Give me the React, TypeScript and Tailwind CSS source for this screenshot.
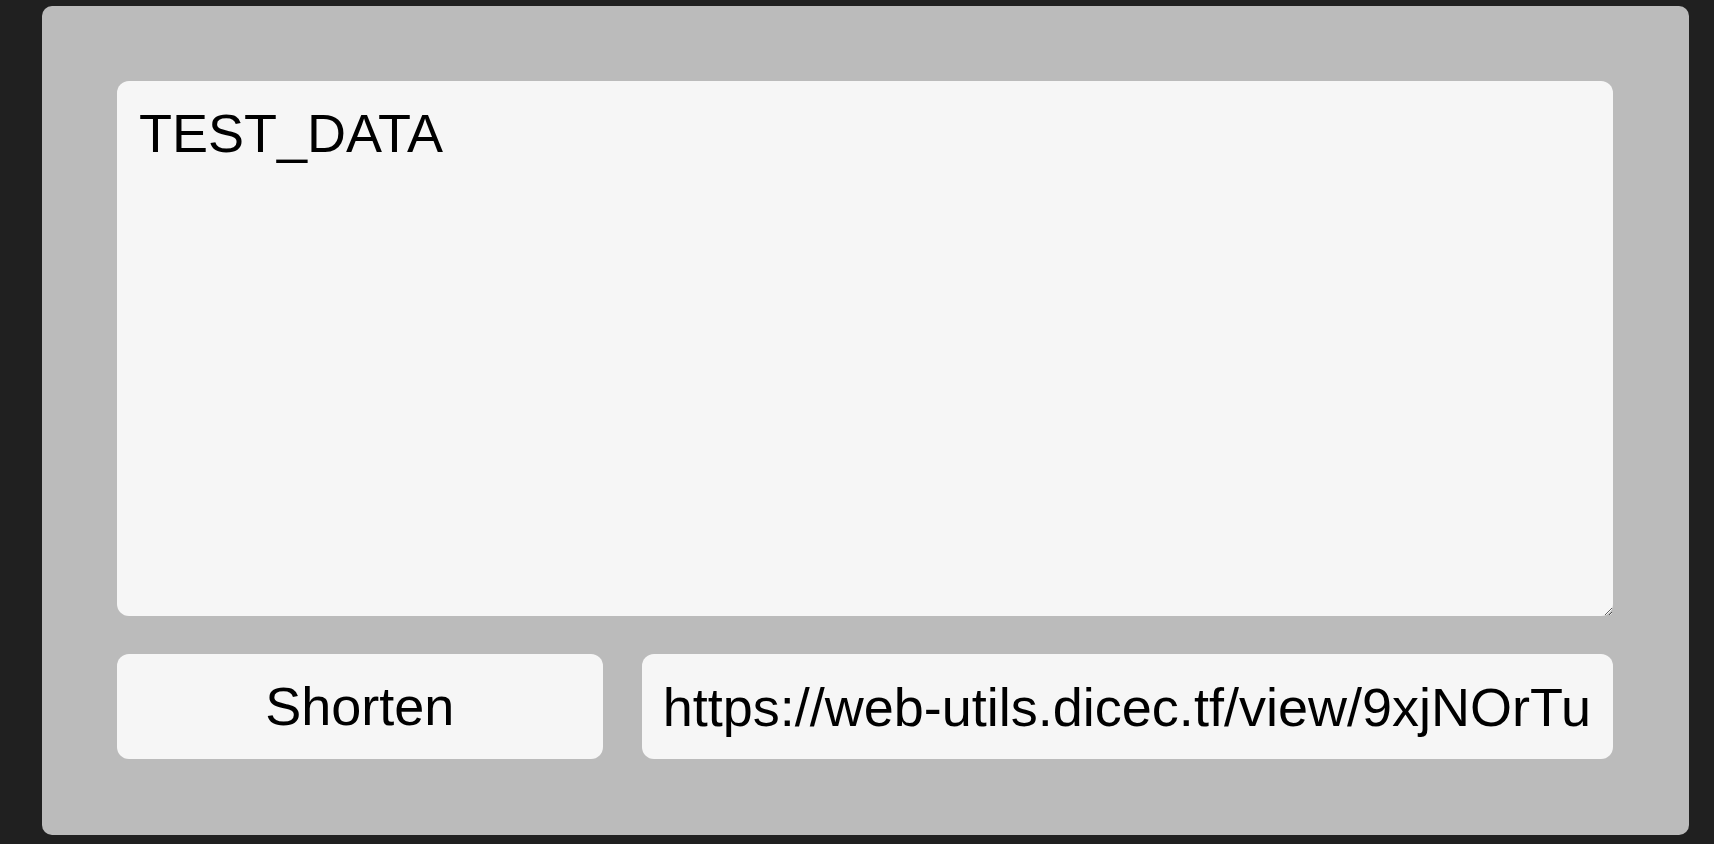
import { useState } from 'react';

const field =
  'rounded-[12px] bg-[#f6f6f6] text-black outline-none font-["Liberation_Sans",Arial,sans-serif] text-[54px]';

export default function App() {
  const [text, setText] = useState('TEST_DATA');
  const [url] = useState('https://web-utils.dicec.tf/view/9xjNOrTu');

  return (
    <div className="min-h-screen bg-[#202020] pl-[42px] pr-[25px] pt-[6px] pb-[9px]">
      <div className="flex flex-col gap-[38px] rounded-[10px] bg-[#bbbbbb] pl-[75px] pr-[76px] pt-[75px] pb-[76px]">
        <textarea
          className={`${field} block h-[535px] w-full px-[22px] pt-[21px] pb-[22px] leading-[1.149]`}
          value={text}
          onChange={(e) => setText(e.target.value)}
        />
        <div className="grid grid-cols-[1fr_2fr] gap-[39px]">
          <button className={`${field} h-[105px] cursor-pointer`}>Shorten</button>
          <input
            className={`${field} h-[105px] w-full px-[21px]`}
            value={url}
            readOnly
          />
        </div>
      </div>
    </div>
  );
}
